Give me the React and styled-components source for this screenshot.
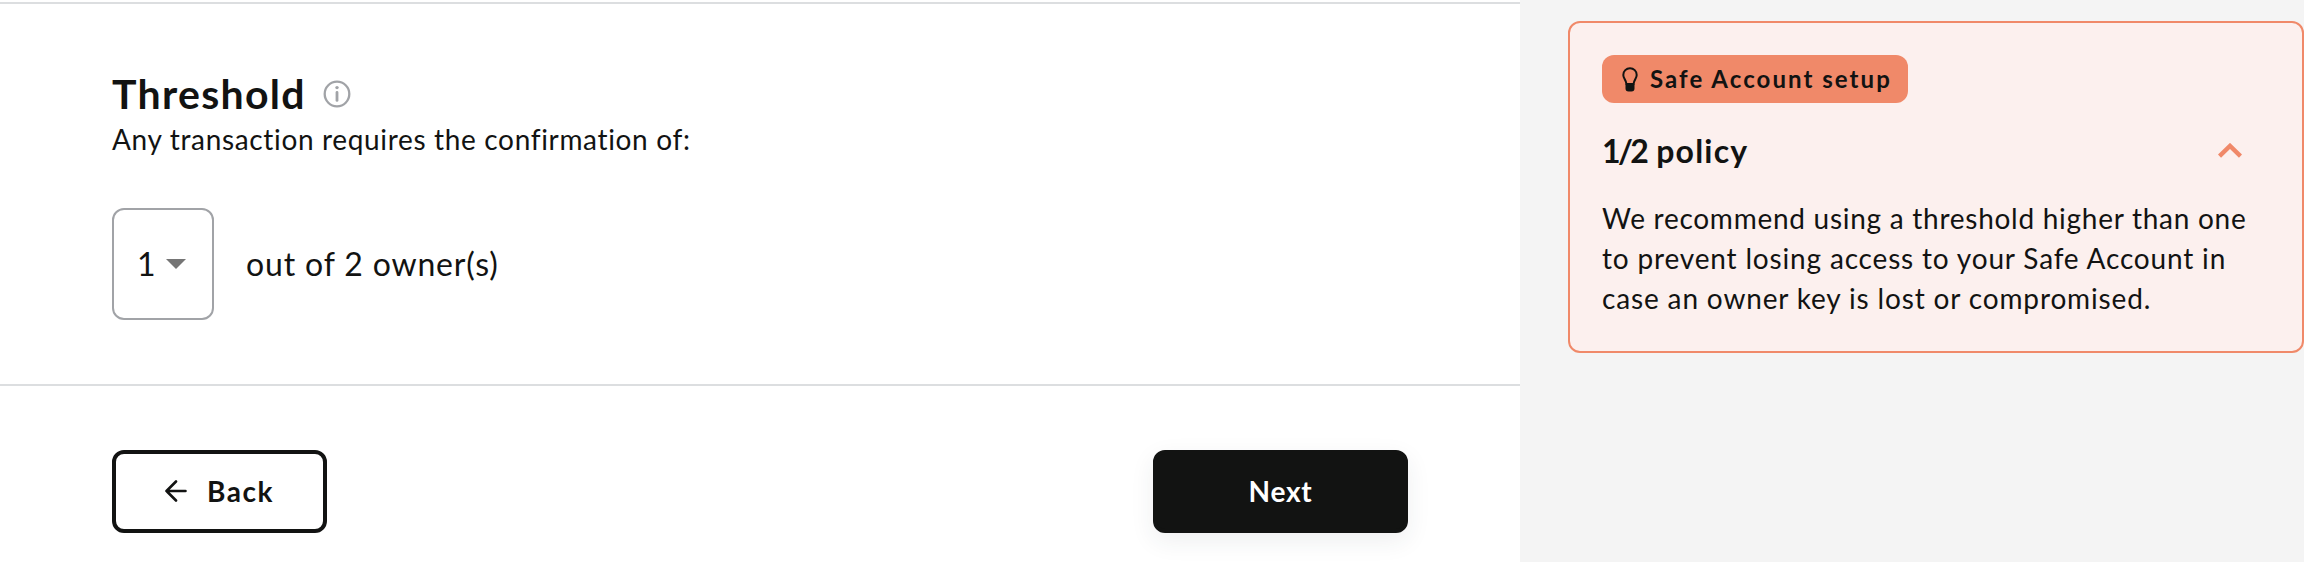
import React from "react";
import styled, { createGlobalStyle } from "styled-components";

const Global = createGlobalStyle`
  * { box-sizing: border-box; }
  body { margin: 0; background: #f4f4f4; color: #121312; font-family: Lato, "Open Sans", sans-serif; }
`;

const Page = styled.div`
  display: flex;
  width: 2304px;
  height: 562px;
  overflow: hidden;
  background: #f4f4f4;
`;
const Form = styled.main`
  width: 1520px;
  padding-top: 2px;
  background: #fff;
`;
const Section = styled.section`
  height: 382px;
  padding: 66px 112px 0;
  border-top: 2px solid #dcdee0;
`;
const Text = styled.span`
  display: block;
  width: max-content;
  white-space: nowrap;
  font-size: ${(p) => p.$size}px;
  line-height: ${(p) => p.$line}px;
  font-weight: ${(p) => p.$weight || 400};
  letter-spacing: ${(p) => p.$spacing || 0}px;
`;
const Fraction = styled.span`
  letter-spacing: -2.6px;
  margin-right: 1px;
`;
const Heading = styled.div`
  display: flex;
  align-items: center;
  gap: 17px;
  height: 48px;
`;
const Picker = styled.div`
  display: flex;
  align-items: center;
  gap: 32px;
  margin-top: 48px;
`;
const Select = styled.button`
  display: flex;
  align-items: center;
  width: 102px;
  height: 112px;
  padding: 0 0 0 23px;
  gap: 10px;
  border: 2px solid #a1a3a7;
  border-radius: 12px;
  background: #fff;
  color: inherit;
  font-family: inherit;
`;
const Actions = styled.footer`
  display: flex;
  justify-content: space-between;
  padding: 64px 112px 0;
  border-top: 2px solid #dcdee0;
`;
const Button = styled.button`
  display: flex;
  align-items: center;
  justify-content: center;
  gap: 20px;
  width: ${(p) => (p.$primary ? 255 : 215)}px;
  height: 83px;
  padding: 0 0 2px;
  border: 4px solid #121312;
  border-radius: 12px;
  background: ${(p) => (p.$primary ? "#121312" : "#fff")};
  color: ${(p) => (p.$primary ? "#fff" : "#121312")};
  box-shadow: ${(p) => (p.$primary ? "0 8px 24px rgba(40,54,61,.08)" : "none")};
  font-family: inherit;
`;
const Aside = styled.aside`
  flex: 1;
  padding: 21px 0 0 48px;
`;
const Hint = styled.article`
  height: 332px;
  padding: 32px;
  border: 2px solid #f08969;
  border-radius: 12px;
  background: #fcf0ee;
`;
const Chip = styled.div`
  display: flex;
  align-items: center;
  gap: 12px;
  width: 306px;
  height: 48px;
  padding-left: 20px;
  border-radius: 12px;
  background: #f08969;
`;
const Policy = styled.div`
  display: flex;
  align-items: center;
  justify-content: space-between;
  height: 47px;
  margin-top: 24px;
  padding-right: 28px;
`;
const Copy = styled.div`
  margin-top: 24px;
`;

export default function App() {
  return (
    <Page>
      <Global />
      <Form>
        <Section>
          <Heading>
            <Text $size={41} $line={48} $weight={700} $spacing={1.3}>Threshold</Text>
            <svg width="28" height="28" viewBox="0 0 28 28" fill="none" stroke="#a1a3a7">
              <circle cx="14" cy="14" r="12.3" strokeWidth="2.3" />
              <path d="M14 12.4v8" strokeWidth="2.8" strokeLinecap="round" />
              <circle cx="14" cy="7.6" r="1.7" fill="#a1a3a7" stroke="none" />
            </svg>
          </Heading>
          <Text $size={28} $line={42} $spacing={0.66}>Any transaction requires the confirmation of:</Text>
          <Picker>
            <Select>
              <Text $size={32} $line={48}>1</Text>
              <svg width="20" height="10" viewBox="0 0 20 10"><path d="M0 0h20L10 10z" fill="#757575" /></svg>
            </Select>
            <Text $size={32} $line={48} $spacing={0.85}>out of 2 owner(s)</Text>
          </Picker>
        </Section>
        <Actions>
          <Button>
            <svg width="22" height="22" viewBox="0 0 22 22" fill="none" stroke="#121312" strokeWidth="2.6" strokeLinecap="round" strokeLinejoin="round">
              <path d="M20.5 11H1.5M11 1.5 1.5 11l9.5 9.5" />
            </svg>
            <Text $size={28} $line={40} $weight={700} $spacing={1.5}>Back</Text>
          </Button>
          <Button $primary>
            <Text $size={28} $line={40} $weight={700} $spacing={0.8}>Next</Text>
          </Button>
        </Actions>
      </Form>
      <Aside>
        <Hint>
          <Chip>
            <svg width="16" height="25" viewBox="0 0 16 25">
              <path d="M8 1.2a6.7 6.7 0 0 0-6.7 6.7c0 3.400 2.700 5 3.200 9.100h7c.5-4.100 3.200-5.700 3.200-9.100A6.700 6.700 0 0 0 8 1.200z" fill="none" stroke="#121312" strokeWidth="2" />
              <path d="M3.500 16.500h9v5a3 3 0 0 1-3 3h-3a3 3 0 0 1-3-3z" fill="#121312" />
            </svg>
            <Text $size={24} $line={36} $weight={700} $spacing={2.05}>Safe Account setup</Text>
          </Chip>
          <Policy>
            <Text $size={32} $line={45} $weight={700} $spacing={1.2}><Fraction>1/2</Fraction> policy</Text>
            <svg width="24" height="15" viewBox="0 0 24 15" fill="none" stroke="#f08969" strokeWidth="4.4"><path d="m1.5 13.1L12 2.900l10.500 10.200" /></svg>
          </Policy>
          <Copy>
            <Text $size={28} $line={40} $spacing={0.73}>We recommend using a threshold higher than one</Text>
            <Text $size={28} $line={40} $spacing={0.83}>to prevent losing access to your Safe Account in</Text>
            <Text $size={28} $line={40} $spacing={0.85}>case an owner key is lost or compromised.</Text>
          </Copy>
        </Hint>
      </Aside>
    </Page>
  );
}
